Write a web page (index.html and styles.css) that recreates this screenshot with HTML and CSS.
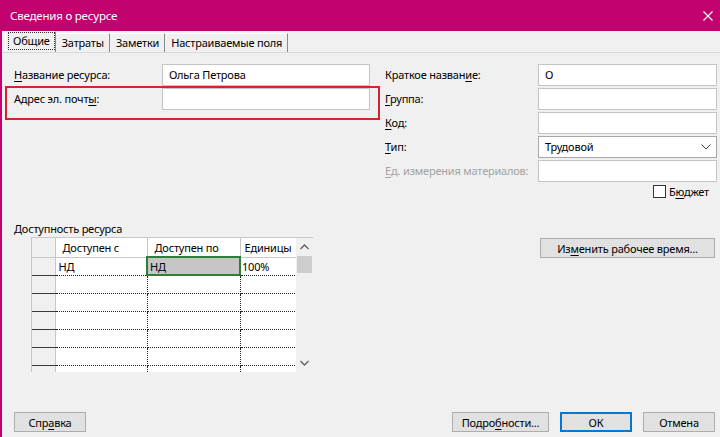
FILE: index.html
```html
<!DOCTYPE html>
<html lang="ru">
<head>
    <meta charset="UTF-8">
    <title>Сведения о ресурсе</title>
    <link rel="stylesheet" href="styles.css">
</head>
<body>
    <div class="titlebar">
        <span class="title">Сведения о ресурсе</span>
        <svg class="close" width="10" height="10" viewBox="0 0 10 10">
            <path d="M0.5 0.5 L9.5 9.5 M9.5 0.5 L0.5 9.5" stroke="#fff" stroke-width="1.2" fill="none"/>
        </svg>
    </div>

    <div class="tabs">
        <div class="tab active"><span class="focus">Общие</span></div>
        <div class="tab">Затраты</div>
        <div class="tab">Заметки</div>
        <div class="tab">Настраиваемые поля</div>
    </div>

    <div class="panel">
        <div class="highlight"></div>

        <div class="form">
            <div class="form-col left">
                <label><u>Н</u>азвание ресурса:</label>
                <div class="field">Ольга Петрова</div>
                <label>Адрес эл. почт<u>ы</u>:</label>
                <div class="field"></div>
            </div>
            <div class="form-col right">
                <label>Краткое назван<u>и</u>е:</label>
                <div class="field">О</div>
                <label><u>Г</u>руппа:</label>
                <div class="field"></div>
                <label><u>К</u>од:</label>
                <div class="field"></div>
                <label><u>Т</u>ип:</label>
                <div class="field select">
                    <span>Трудовой</span>
                    <svg width="10" height="6" viewBox="0 0 10 6">
                        <path d="M0.5 0.5 L5 5 L9.5 0.5" stroke="#444" stroke-width="1" fill="none"/>
                    </svg>
                </div>
                <label class="disabled"><u>Е</u>д. измерения материалов:</label>
                <div class="field"></div>
            </div>
        </div>

        <div class="check-row">
            <span class="checkbox"></span>
            <span>Б<u>ю</u>джет</span>
        </div>

        <div class="section-label">Доступность ресурса</div>

        <div class="avail">
            <div class="grid">
                <div class="grid-body">
                    <table>
                        <tr class="head">
                            <th class="rh"></th>
                            <th class="c1">Доступен с</th>
                            <th class="c2">Доступен по</th>
                            <th class="c3">Единицы</th>
                        </tr>
                        <tr>
                            <td class="rh"></td>
                            <td class="c1 edge">НД</td>
                            <td class="c2 active">НД</td>
                            <td class="c3">100%</td>
                        </tr>
                        <tr><td class="rh"></td><td></td><td></td><td></td></tr>
                        <tr><td class="rh"></td><td></td><td></td><td></td></tr>
                        <tr><td class="rh"></td><td></td><td></td><td></td></tr>
                        <tr><td class="rh"></td><td></td><td></td><td></td></tr>
                        <tr><td class="rh"></td><td></td><td></td><td></td></tr>
                        <tr><td class="rh"></td><td></td><td></td><td></td></tr>
                    </table>
                </div>
                <div class="scrollbar">
                    <svg class="arrow" width="9" height="6" viewBox="0 0 9 6">
                        <path d="M0.5 5 L4.5 1 L8.5 5" stroke="#606060" stroke-width="1.3" fill="none"/>
                    </svg>
                    <div class="thumb"></div>
                    <div class="track"></div>
                    <svg class="arrow" width="9" height="6" viewBox="0 0 9 6">
                        <path d="M0.5 1 L4.5 5 L8.5 1" stroke="#606060" stroke-width="1.3" fill="none"/>
                    </svg>
                </div>
            </div>
            <button class="btn btn-work">Из<u>м</u>енить рабочее время...</button>
        </div>

        <div class="footer">
            <button class="btn">Спр<u>а</u>вка</button>
            <div class="footer-right">
                <button class="btn btn-wide">Подро<u>б</u>ности...</button>
                <button class="btn btn-default">ОК</button>
                <button class="btn">Отмена</button>
            </div>
        </div>
    </div>
</body>
</html>
```

FILE: styles.css
```css
/* Resource information dialog */
* {
    margin: 0;
    padding: 0;
    box-sizing: border-box;
}

body {
    width: 720px;
    height: 437px;
    overflow: hidden;
    background: #f0f0f0;
    border-left: 2px solid #c2026f;
    font-family: "Noto Sans", "Open Sans", sans-serif;
    font-size: 11px;
    letter-spacing: -0.2px;
    color: #000;
}

u {
    text-decoration-thickness: 1px;
    text-underline-offset: 2px;
}

.titlebar {
    height: 31px;
    margin-left: -2px;
    background: #c2026f;
    color: #fff;
    display: flex;
    align-items: center;
    justify-content: space-between;
    padding: 0 7px 0 10px;
}

.title {
    font-size: 11.5px;
}

/* Tabs */
.tabs {
    height: 22px;
    display: flex;
    align-items: flex-end;
    padding-left: 3px;
    border-bottom: 1px solid #d9d9d9;
}

.tab {
    height: 19px;
    line-height: 17px;
    padding: 0 5px 0 6px;
    border-right: 1px solid #8a8a8a;
    border-top: 1px solid #fff;
    white-space: nowrap;
}

.tab.active {
    height: 21px;
    padding: 1px 1px 0 3px;
    line-height: 16px;
    background: #f0f0f0;
    border-left: 1px solid #fff;
}

.focus {
    display: inline-block;
    padding: 0 4px;
    outline: 1px dotted #333;
    outline-offset: 0;
}

/* Panel */
.panel {
    position: relative;
    padding: 11px 3px 0 11px;
}

.highlight {
    position: absolute;
    left: 3px;
    top: 33px;
    width: 375px;
    height: 34px;
    border: 2px solid #d8232a;
    pointer-events: none;
}

.form {
    display: flex;
    gap: 14px;
}

.form-col {
    display: grid;
    grid-auto-rows: 24px;
    align-items: start;
}

.form-col.left {
    grid-template-columns: 149px 208px;
}

.form-col.right {
    grid-template-columns: 154px 179px;
}

.form-col label {
    line-height: 22px;
    padding-left: 1px;
    white-space: nowrap;
}

.form-col label.disabled {
    color: #a3a3a3;
}

.field {
    height: 22px;
    background: #fff;
    border: 1px solid #c4c4c4;
    padding-left: 6px;
    line-height: 20px;
}

.field.select {
    display: flex;
    align-items: center;
    justify-content: space-between;
    padding-right: 5px;
    border-color: #a8a8a8;
}

.check-row {
    height: 15px;
    display: flex;
    justify-content: flex-end;
    align-items: center;
    gap: 3px;
    padding-right: 8px;
    line-height: 15px;
}

.checkbox {
    width: 13px;
    height: 13px;
    background: #fff;
    border: 1px solid #333;
}

.section-label {
    margin-top: 22px;
    line-height: 16px;
    padding-left: 1px;
}

/* Availability grid */
.avail {
    display: flex;
    justify-content: space-between;
    align-items: flex-start;
}

.grid {
    margin-left: 18px;
    width: 282px;
    height: 135px;
    display: flex;
    border-top: 1px solid #c8c8c8;
    border-left: 1px solid #c8c8c8;
    background: #fff;
}

.grid-body {
    width: 265px;
    overflow: hidden;
}

table {
    border-collapse: collapse;
    table-layout: fixed;
    width: 265px;
}

th, td {
    height: 18px;
    padding: 0 0 0 3px;
    text-align: left;
    font-weight: normal;
    white-space: nowrap;
    overflow: hidden;
    border-right: 1px dotted #222;
    border-bottom: 1px dotted #222;
}

tr.head th {
    height: 19px;
    padding-left: 7px;
    border-right: 1px solid #c8c8c8;
    border-bottom: 1px solid #c8c8c8;
}

tr.head th.c3 {
    padding-left: 4px;
    border-right: 1px solid #8c8c8c;
}

.rh {
    width: 23px;
    background: #f0f0f0;
    border-right: 1px solid #c8c8c8;
    border-bottom: 1px solid #3a3a3a;
}

.c1 { width: 92px; }
.c2 { width: 93px; }
.c3 { width: 57px; }

td.c3 {
    padding-left: 1px;
}

td.edge {
    border-left: 1px solid #3e8e4a;
}

td.active {
    background: #c6c6c6;
    border: 2px solid #2f7d3a;
    padding-left: 2px;
}

.grid-body td:nth-child(4) {
    border-right: 1px solid #8c8c8c;
}

.scrollbar {
    width: 17px;
    background: #f0f0f0;
    display: flex;
    flex-direction: column;
    align-items: center;
}

.scrollbar .arrow {
    margin: 6px 0;
    flex: none;
}

.thumb {
    width: 15px;
    height: 17px;
    background: #cdcdcd;
    flex: none;
}

.track {
    flex: 1;
}

/* Buttons */
.btn {
    height: 20px;
    width: 72px;
    background: #e1e1e1;
    border: 1px solid #adadad;
    font-family: inherit;
    font-size: 11px;
    letter-spacing: -0.2px;
    color: #000;
    line-height: 17px;
}

.btn-work {
    width: 175px;
    margin-top: 1px;
    margin-right: 2px;
}

.btn-wide {
    width: 97px;
}

.btn-default {
    border: 1px solid #0078d7;
    box-shadow: inset 0 0 0 1px #0078d7;
}

.footer {
    margin-top: 40px;
    padding-left: 1px;
    padding-right: 2px;
    display: flex;
    justify-content: space-between;
}

.footer-right {
    display: flex;
    gap: 11px;
}
```
